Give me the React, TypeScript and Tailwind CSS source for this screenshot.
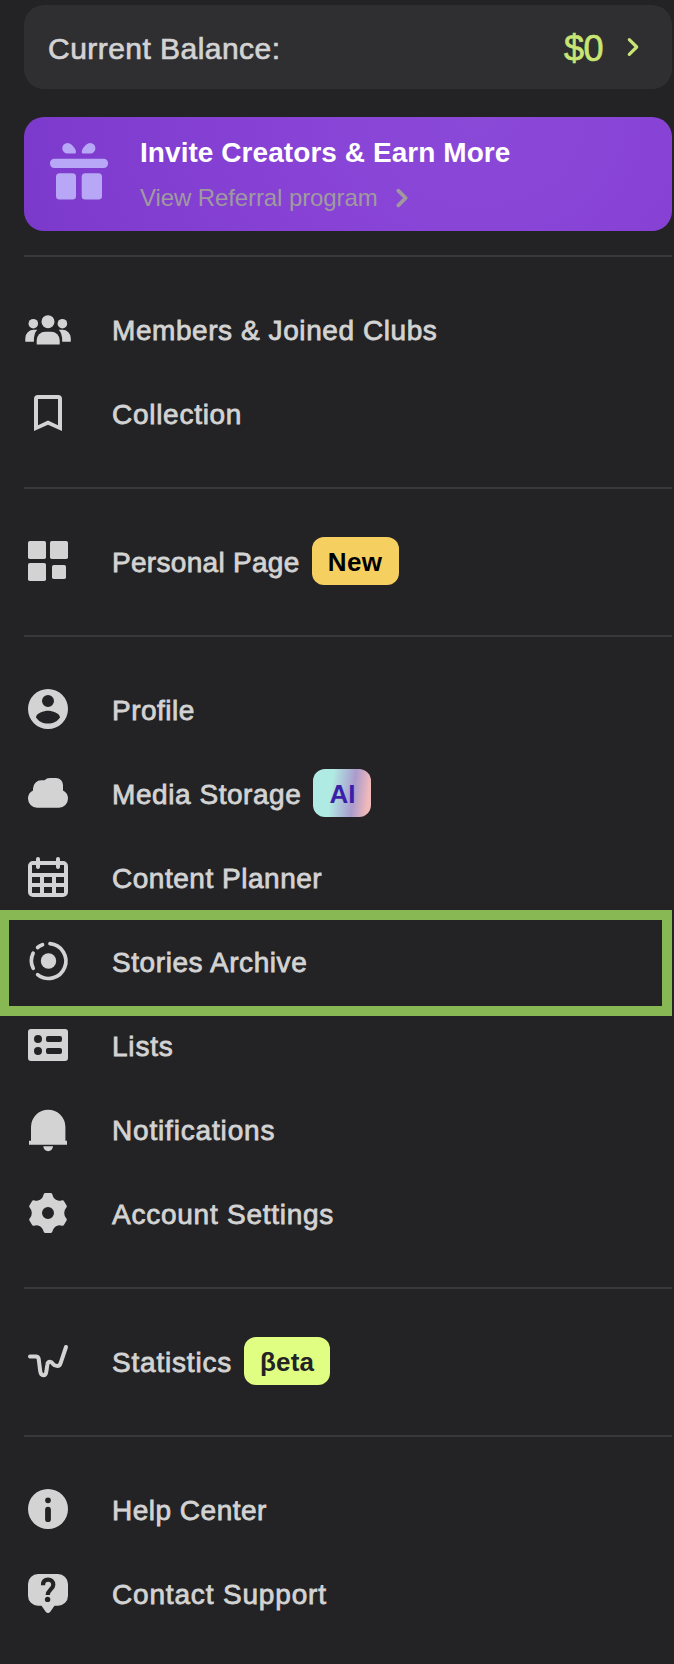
import type { ReactNode } from 'react'

type Item = {
  label: string
  icon: ReactNode
  tracking: string
  badge?: { text: string; className: string }
  highlighted?: boolean
}

const icons = {
  members: (
    <>
      <circle cx="24" cy="16.7" r="6.5" />
      <circle cx="9.3" cy="18.7" r="4.8" />
      <circle cx="38.4" cy="18.7" r="4.8" />
      <path d="M12.7 39.4V35.2a8.5 8.5 0 0 1 8.5-8.5h6a8.5 8.5 0 0 1 8.5 8.5v4.2z" />
      <path d="M1.3 36.7v-3.5a8.4 8.4 0 0 1 8.4-8.4h3.6q-3.6 3.2-3.4 11.9z" />
      <path d="M46.8 36.7v-3.5a8.4 8.4 0 0 0-8.4-8.4h-3.7q3.6 3.2 3.5 11.9z" />
    </>
  ),
  collection: (
    <path
      fillRule="evenodd"
      d="M14 6h20a4 4 0 0 1 4 4v32l-14-6.2L10 42V10a4 4 0 0 1 4-4zm0 4v26.2l10-4.7 10 4.7V10z"
    />
  ),
  page: (
    <>
      <rect x="4" y="4" width="18" height="18" rx="1.8" />
      <rect x="26" y="4" width="18" height="18" rx="1.8" />
      <rect x="4" y="26" width="18" height="18" rx="1.8" />
      <rect x="28" y="28" width="14" height="14" rx="1.8" />
    </>
  ),
  profile: (
    <path
      fillRule="evenodd"
      d="M24 4a20 20 0 1 0 0 40 20 20 0 0 0 0-40zm0 6a6 6 0 1 1 0 12 6 6 0 0 1 0-12zm0 28.6c-5 0-9.5-2.4-12-6.2 0-4.3 8-6.7 12-6.7s12 2.4 12 6.7c-2.5 3.8-7 6.2-12 6.2z"
    />
  ),
  cloud: (
    <path d="M9 21.5v-2a8.3 8.3 0 0 1 8.3-8.3h3.2Q22.7 9 25.8 9H32a7 7 0 0 1 7 7v5.5a9 9 0 0 1 5 8.1 9 9 0 0 1-9 9.1H13a9 9 0 0 1-9-9.1 9 9 0 0 1 5-8.1z" />
  ),
  calendar: (
    <>
      <path
        fillRule="evenodd"
        d="M9 8h30a5 5 0 0 1 5 5v26a5 5 0 0 1-5 5H9a5 5 0 0 1-5-5V13a5 5 0 0 1 5-5zm-1 4v8h32v-8zm0 12v6h8v-6zm12 0v6h8v-6zm12 0v6h8v-6zM8 34v6h8v-6zm12 0v6h8v-6zm12 0v6h8v-6z"
      />
      <path d="M14 6v8M34 6v8" stroke="currentColor" strokeWidth="4" strokeLinecap="round" />
    </>
  ),
  stories: (
    <>
      <circle cx="24.5" cy="24" r="7.7" />
      <path
        d="M26 6.7A17.4 17.4 0 1 1 13.6 37.6M9.2 31.3A17.4 17.4 0 0 1 9.1 16.2M13.6 10.5Q15.8 8.7 18.5 7.7"
        fill="none"
        stroke="currentColor"
        strokeWidth="3.7"
        strokeLinecap="round"
      />
    </>
  ),
  lists: (
    <path
      fillRule="evenodd"
      d="M7 8h34a3 3 0 0 1 3 3v26a3 3 0 0 1-3 3H7a3 3 0 0 1-3-3V11a3 3 0 0 1 3-3zm7 6a4 4 0 1 0 0 8 4 4 0 0 0 0-8zm0 12a4 4 0 1 0 0 8 4 4 0 0 0 0-8zm10-11a2 2 0 0 0-2 2v2a2 2 0 0 0 2 2h12a2 2 0 0 0 2-2v-2a2 2 0 0 0-2-2zm0 12a2 2 0 0 0-2 2v2a2 2 0 0 0 2 2h12a2 2 0 0 0 2-2v-2a2 2 0 0 0-2-2z"
    />
  ),
  bell: (
    <>
      <path d="M7 35.7V21.9a17.2 17.2 0 0 1 34.4 0v13.8H43v4H5v-4z" />
      <path d="M19.3 41.3H29a4.85 4.85 0 0 1-9.7 0z" />
    </>
  ),
  gear: (
    <path
      fillRule="evenodd"
      d="M21.500 4h5q1.300 0 1.800 1.300Q29.500 10.400 34 11.600q2 .6 3.900-.3 1.300-.4 2 .6l2.800 4.900q.5 1.200-.5 2-2 2.200-2 5.200t2 5.200q1 .8.500 2l-2.800 4.900q-.7 1-2 .6-1.900-.9-3.900-.3-4.500 1.200-5.700 6.300-.5 1.300-1.800 1.300h-5q-1.300 0-1.800-1.300-1.200-5.100-5.700-6.300-2-.6-3.900.3-1.300.4-2-.6l-2.800-4.900q-.5-1.200.5-2Q7.800 27 7.800 24t-2-5.200q-1-.8-.5-2l2.800-4.900q.7-1 2-.6 1.900.9 3.900.3 4.500-1.200 5.700-6.300Q20.200 4 21.500 4zM24 18a6 6 0 1 0 0 12 6 6 0 0 0 0-12z"
    />
  ),
  statistics: (
    <path
      d="M6 19.6h5.8q2.4 0 2.9 2.4l1.5 12.1q.6 4.2 3.2 4.2t3-4.2l.9-6.1q.4-3.3 2.6-3.3 1.7 0 3.1 2.2 1.8 2.2 4.3 2.2 2.4 0 3.4-3.2L42 10"
      fill="none"
      stroke="currentColor"
      strokeWidth="4"
      strokeLinecap="round"
      strokeLinejoin="round"
    />
  ),
  info: (
    <path
      fillRule="evenodd"
      d="M24 4a20 20 0 1 0 0 40 20 20 0 0 0 0-40zm0 8.5a2.85 2.85 0 1 1 0 5.7 2.85 2.85 0 0 1 0-5.7zm0 9.2a2.9 2.9 0 0 1 2.9 2.9v9.6a2.9 2.9 0 0 1-5.8 0v-9.6a2.9 2.9 0 0 1 2.9-2.9z"
    />
  ),
  support: (
    <>
      <path d="M14 5h20a10 10 0 0 1 10 10v11.7a10 10 0 0 1-10 10h-3.5l-4.2 6q-2.300 2.600-4.600 0l-4.200-6H14a10 10 0 0 1-10-10V15A10 10 0 0 1 14 5z" />
      <path
        d="M19 16.200c0-3.800 2-5.500 5.100-5.500s5.200 2 5.200 5c0 4.300-5.600 5.200-5.600 10.300"
        fill="none"
        stroke="#232325"
        strokeWidth="4.2"
      />
      <circle cx="23.6" cy="30.4" r="2.7" fill="#232325" />
    </>
  ),
}

const SECTIONS: Item[][] = [
  [
    { label: 'Members & Joined Clubs', icon: icons.members, tracking: 'tracking-[0.57px]' },
    { label: 'Collection', icon: icons.collection, tracking: 'tracking-[0.72px]' },
  ],
  [
    {
      label: 'Personal Page',
      icon: icons.page,
      tracking: 'tracking-[0.3px]',
      badge: { text: 'New', className: 'w-[87px] bg-[#f5d060] tracking-[0.4px] text-black' },
    },
  ],
  [
    { label: 'Profile', icon: icons.profile, tracking: 'tracking-[0.5px]' },
    {
      label: 'Media Storage',
      icon: icons.cloud,
      tracking: 'tracking-[0.56px]',
      badge: {
        text: 'AI',
        className:
          'w-[58px] bg-[linear-gradient(97deg,#b0ebe3_0%,#b0ebe3_32%,#aa9bcd_68%,#f0b9ba_92%)] text-[#3b1fa8]',
      },
    },
    { label: 'Content Planner', icon: icons.calendar, tracking: 'tracking-[0.52px]' },
    {
      label: 'Stories Archive',
      icon: icons.stories,
      tracking: 'tracking-[0.57px]',
      highlighted: true,
    },
    { label: 'Lists', icon: icons.lists, tracking: 'tracking-[0.8px]' },
    { label: 'Notifications', icon: icons.bell, tracking: 'tracking-[0.83px]' },
    { label: 'Account Settings', icon: icons.gear, tracking: 'tracking-[0.75px]' },
  ],
  [
    {
      label: 'Statistics',
      icon: icons.statistics,
      tracking: 'tracking-[0.8px]',
      badge: { text: 'βeta', className: 'w-[86px] bg-[#e0ff82] tracking-[0.2px] text-[#232325]' },
    },
  ],
  [
    { label: 'Help Center', icon: icons.info, tracking: 'tracking-[0.5px]' },
    { label: 'Contact Support', icon: icons.support, tracking: 'tracking-[0.83px]' },
  ],
]

function Chevron({ className }: { className: string }) {
  return (
    <svg
      width="14"
      height="22"
      viewBox="0 0 14 22"
      fill="none"
      stroke="currentColor"
      strokeLinecap="round"
      strokeLinejoin="round"
      className={`shrink-0 ${className}`}
      aria-hidden="true"
    >
      <path d="M3.3 3.6 10.700 11l-7.400 7.400" />
    </svg>
  )
}

function GiftIcon() {
  return (
    <svg width="58" height="57" viewBox="0 0 58 57" fill="#b8a7f6" className="mb-1.5 shrink-0" aria-hidden="true">
      <path d="M17.500 0C21.500 0 26 6 26 9q0 1.500-1.500 1.500h-7a5.250 5.250 0 0 1 0-10.500z" />
      <path d="M40.200 0c-4 0-8.500 6-8.500 9q0 1.500 1.500 1.500h7a5.250 5.250 0 0 0 0-10.500z" />
      <rect y="15.8" width="58" height="9.2" rx="4.2" />
      <rect x="6" y="30.2" width="20" height="26.3" rx="3.5" />
      <rect x="31.7" y="30.2" width="20.3" height="26.3" rx="3.5" />
    </svg>
  )
}

function MenuRow({ item }: { item: Item }) {
  return (
    <a className="relative flex h-[84px] items-center text-[#d3d3d3]">
      <svg width="48" height="48" viewBox="0 0 48 48" fill="currentColor" className="shrink-0" aria-hidden="true">
        {item.icon}
      </svg>
      <span
        className={`ml-10 pt-1 text-[28px] leading-8 whitespace-nowrap [-webkit-text-stroke:0.8px_currentColor] ${item.tracking}`}
      >
        {item.label}
      </span>
      {item.badge && (
        <span
          className={`ml-3 flex h-12 shrink-0 items-center justify-center rounded-xl pt-0.5 text-[26px] leading-8 font-bold ${item.badge.className}`}
        >
          {item.badge.text}
        </span>
      )}
      {item.highlighted && (
        <div className="pointer-events-none absolute -top-[9px] right-0 -left-6 h-[106px] border-[10px] border-l-[9px] border-[#87b854]" />
      )}
    </a>
  )
}

export default function App() {
  return (
    <div className="min-h-[1664px] w-[674px] overflow-hidden bg-[#232325] pt-[5px] pr-0.5 pl-6 font-['Liberation_Sans',Arial,sans-serif]">
      <div className="flex h-[84px] items-center rounded-[20px] bg-[#2f2f31] pr-8 pl-6">
        <span className="pt-[3px] text-[30px] leading-9 tracking-[0.46px] text-[#d3d3d3] [-webkit-text-stroke:0.7px_currentColor]">
          Current Balance:
        </span>
        <span className="ml-auto pt-1 text-[36px] leading-10 tracking-[-0.5px] text-[#c9e574] [-webkit-text-stroke:0.7px_currentColor]">
          $0
        </span>
        <Chevron className="ml-[23px] stroke-[3.2] text-[#c9e574]" />
      </div>

      <div className="mt-7 flex h-[114px] items-center rounded-[20px] bg-[radial-gradient(ellipse_480px_400px_at_70%_0%,#8b49d8_0%,#8742d5_45%,#7b39cb_100%)] pl-[26px]">
        <GiftIcon />
        <div className="ml-8 flex flex-col pt-px">
          <span className="text-[28px] leading-8 font-bold tracking-[0.06px] text-white">
            Invite Creators &amp; Earn More
          </span>
          <div className="mt-[15px] flex items-center text-[#a09a9f]">
            <span className="text-[24px] leading-7 tracking-[-0.1px]">View Referral program</span>
            <Chevron className="ml-[17px] stroke-[3.7]" />
          </div>
        </div>
      </div>

      <nav className="mt-6">
        {SECTIONS.map((items) => (
          <div key={items[0].label} className="border-t-2 border-[#39393b] pt-[30px] pb-8">
            {items.map((item) => (
              <MenuRow key={item.label} item={item} />
            ))}
          </div>
        ))}
      </nav>
    </div>
  )
}
